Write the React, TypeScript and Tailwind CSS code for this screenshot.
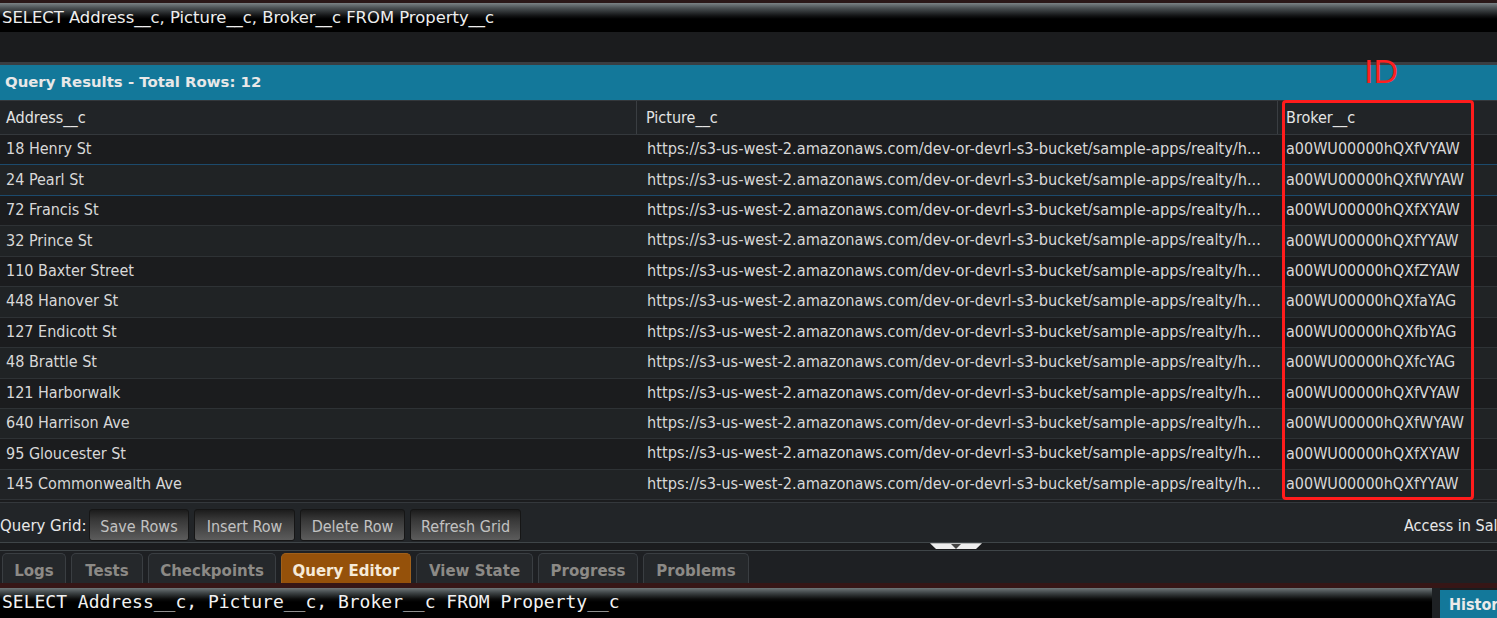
import React from "react";

const rows = [
  ["18 Henry St", "a00WU00000hQXfVYAW"],
  ["24 Pearl St", "a00WU00000hQXfWYAW"],
  ["72 Francis St", "a00WU00000hQXfXYAW"],
  ["32 Prince St", "a00WU00000hQXfYYAW"],
  ["110 Baxter Street", "a00WU00000hQXfZYAW"],
  ["448 Hanover St", "a00WU00000hQXfaYAG"],
  ["127 Endicott St", "a00WU00000hQXfbYAG"],
  ["48 Brattle St", "a00WU00000hQXfcYAG"],
  ["121 Harborwalk", "a00WU00000hQXfVYAW"],
  ["640 Harrison Ave", "a00WU00000hQXfWYAW"],
  ["95 Gloucester St", "a00WU00000hQXfXYAW"],
  ["145 Commonwealth Ave", "a00WU00000hQXfYYAW"],
];

const url =
  "https://s3-us-west-2.amazonaws.com/dev-or-devrl-s3-bucket/sample-apps/realty/h...";

const sans = "font-['DejaVu_Sans_Condensed','DejaVu_Sans',sans-serif]";

export default function App() {
  const tabs = ["Logs", "Tests", "Checkpoints", "Query Editor", "View State", "Progress", "Problems"];
  const tabW = ["w-[64px]", "w-[72px]", "w-[128px]", "w-[130px]", "w-[117px]", "w-[100px]", "w-[106px]"];
  return (
    <div className={`w-[1497px] h-[618px] overflow-hidden bg-[#1b1c1e] flex flex-col text-[#d6d6d6] ${sans}`}>
      <div className="h-[3px] bg-[#2a1818] shrink-0" />
      <div className="h-[29px] shrink-0 bg-[linear-gradient(to_bottom,#7b8386_0px,#4a5053_5px,#101112_13px,#000_16px)] flex items-center pl-[2px] pt-[1px] font-['DejaVu_Sans',sans-serif] text-[16.4px] text-[#eeeeee] whitespace-nowrap">
        SELECT Address__c, Picture__c, Broker__c FROM Property__c
      </div>
      <div className="h-[30px] shrink-0 bg-[#1b1c1e]" />
      <div className="h-[3px] shrink-0 bg-[#3a3e42]" />
      <div className="h-[35px] shrink-0 bg-[#13789a] flex items-center pl-[5px] font-['DejaVu_Sans',sans-serif] font-bold text-[14.9px] text-[#e8e8e8]">
        Query Results - Total Rows: 12
      </div>

      <div className="relative shrink-0">
        <div className="grid grid-cols-[637px_641px_1fr] h-[35px] bg-[#212427] border-t border-b border-[#34383c] text-[16px] text-[#e4e4e4]">
          <div className="border-r border-[#3a3e42] flex items-center pl-[6px]">Address__c</div>
          <div className="border-r border-[#3a3e42] flex items-center pl-[9px]">Picture__c</div>
          <div className="flex items-center pl-[8px]">Broker__c</div>
        </div>
        {rows.map(([addr, id], i) => (
          <div
            key={i}
            className={`grid grid-cols-[637px_641px_1fr] h-[30.45px] border-b text-[16px] text-[#d8d8d8] whitespace-nowrap ${
              i === 0 || i === 1 ? "border-[#1c4a6c]" : "border-[#2e3235]"
            } ${i % 2 === 1 ? "bg-[#202325]" : "bg-[#1b1c1e]"}`}
          >
            <div className="flex items-center pl-[6px] pb-[1px]">{addr}</div>
            <div className="flex items-center pl-[10px] pb-[1px] overflow-hidden text-[16.2px]">{url}</div>
            <div className="flex items-center pl-[8px] pb-[1px]">{id}</div>
          </div>
        ))}
        <div className="h-[3px] bg-[#1b1c1e] border-b border-[#34383c]" />

        <div className="absolute left-[1282px] top-[0px] w-[192px] h-[400px] border-[3px] border-[#ff1c1c] rounded-[4px] pointer-events-none" />
        <div className="absolute left-[1364px] top-[-46px] text-[34px] leading-none text-[#ff2020] font-['Liberation_Sans',sans-serif] font-light">
          ID
        </div>
      </div>

      <div className="h-[39px] shrink-0 bg-[#222528] flex items-end pb-[1px] text-[16px] text-[#e8e8e8] whitespace-nowrap">
        <span className="w-[89px] h-[32px] flex items-center pt-[2px] text-[16.6px]">Query Grid:</span>
        <div className="flex gap-[5px] items-center">
          {[
            ["Save Rows", "w-[100px]"],
            ["Insert Row", "w-[101px]"],
            ["Delete Row", "w-[105px]"],
            ["Refresh Grid", "w-[111px]"],
          ].map(([b, w]) => (
            <div
              key={b}
              className={`${w} h-[32px] pt-[3px] rounded-[3px] border border-[#161616] bg-[linear-gradient(to_bottom,#1c1c1c_0%,#363636_30%,#5c5c5c_100%)] flex items-center justify-center text-[#c2c2c2]`}
            >
              {b}
            </div>
          ))}
        </div>
        <div className="flex-1" />
        <span className="w-[93px] h-[32px] flex items-center pt-[2px] text-[16px] overflow-hidden">Access in Sal</span>
      </div>

      <div className="h-[9px] shrink-0 bg-[#1b1c1e] border-t border-b border-[#3f4548] relative">
        <div className="absolute left-[930px] top-0 w-[52px] h-[6px] bg-[#eeeeee] [clip-path:polygon(0_0,100%_0,88%_100%,12%_100%)] flex justify-center">
          <div className="w-0 h-0 border-l-[5px] border-r-[5px] border-t-[5px] border-l-transparent border-r-transparent border-t-[#444] mt-[1px]" />
        </div>
      </div>

      <div className="h-[32px] shrink-0 bg-[#1e2023] flex items-end gap-[5px] pl-[2px] font-['DejaVu_Sans',sans-serif] font-bold text-[15px]">
        {tabs.map((t, i) => (
          <div
            key={t}
            className={`${tabW[i]} h-[30px] pt-[4px] rounded-t-[5px] border border-b-0 flex items-center justify-center ${
              t === "Query Editor"
                ? "bg-[#95510a] border-[#a0601a] text-[#f6ead8]"
                : "bg-[#25282b] border-[#3a3e42] text-[#8c8a86]"
            }`}
          >
            {t}
          </div>
        ))}
      </div>

      <div className="h-[5px] shrink-0 bg-[#361616]" />

      <div className="flex-1 flex">
        <div className="w-[1432px] bg-[linear-gradient(to_bottom,#6f7779_0px,#3d4345_5px,#0b0c0c_11px,#000_14px)] flex items-center pl-[2px] pb-[7px] font-['DejaVu_Sans_Mono',monospace] text-[18px] text-[#f2f2f2] whitespace-nowrap">
          SELECT Address__c, Picture__c, Broker__c FROM Property__c
        </div>
        <div className="w-[8px] bg-[#1e2124]" />
        <div className="flex-1 mt-[2px] bg-[#13789a] pl-[9px] pb-[2px] flex items-center font-['DejaVu_Sans_Condensed','DejaVu_Sans',sans-serif] font-bold text-[16px] text-[#eaeaea] overflow-hidden whitespace-nowrap">
          Histor
        </div>
      </div>
    </div>
  );
}
